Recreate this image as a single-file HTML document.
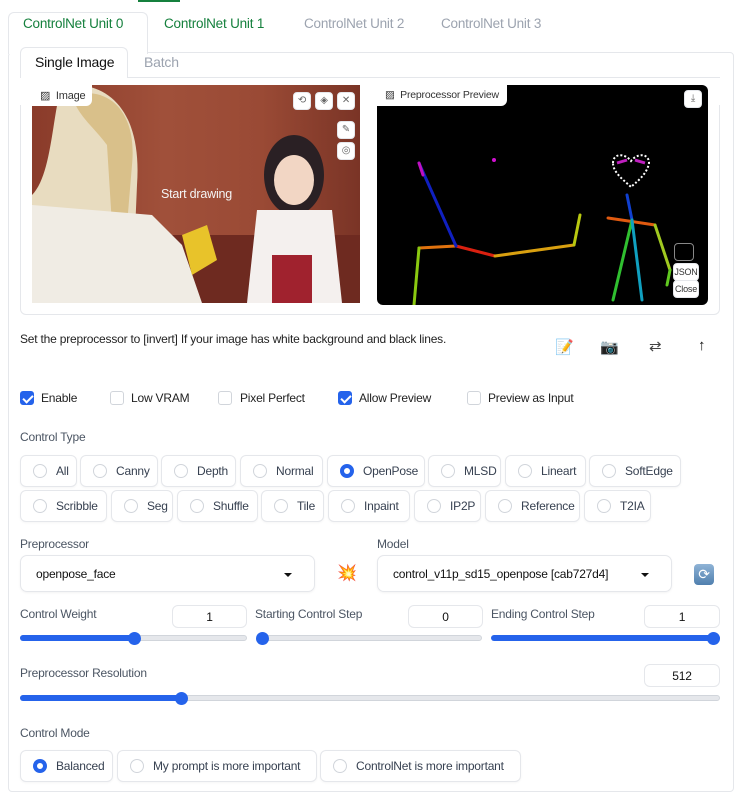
<!DOCTYPE html>
<html><head><meta charset="utf-8"><style>
*{box-sizing:border-box;margin:0;padding:0}
body{width:740px;height:786px;background:#fff;font-family:"Liberation Sans",sans-serif;color:#374151;position:relative;overflow:hidden;font-size:12px;letter-spacing:-0.2px}
.a{position:absolute}
.lbl{position:absolute;font-size:12px;color:#4b5563}
.btn{position:absolute;border:1px solid #e5e7eb;border-radius:6px;background:#fff;height:32px;display:flex;align-items:center;padding-left:12px;font-size:12px;color:#374151;box-shadow:0 1px 2px rgba(0,0,0,.04)}
.rad{width:14px;height:14px;border-radius:50%;border:1px solid #d1d5db;margin-right:9px;flex:none;background:#fff}
.rad.on{border:4px solid #2563eb}
.cb{position:absolute;width:14px;height:14px;border:1px solid #d1d5db;border-radius:3px;background:#fff}
.cb.on{background:#2563eb;border-color:#2563eb}
.cb.on:after{content:"";position:absolute;left:4px;top:1px;width:4px;height:8px;border:solid #fff;border-width:0 2px 2px 0;transform:rotate(45deg)}
.num{position:absolute;border:1px solid #e5e7eb;border-radius:6px;height:23px;text-align:center;line-height:22px;font-size:12px;color:#111}
.track{position:absolute;height:6px;border-radius:3px;background:#e5e7eb;border:1px solid #d1d5db}
.fill{position:absolute;height:6px;border-radius:3px;background:#2563eb}
.thumb{position:absolute;width:13px;height:13px;border-radius:50%;background:#2563eb}
.sel{position:absolute;border:1px solid #e5e7eb;border-radius:7px;height:37px;display:flex;align-items:center;padding-left:15px;font-size:12px;color:#111;box-shadow:0 1px 2px rgba(0,0,0,.05)}
.sel:after{content:"";position:absolute;right:22px;top:17px;border:4px solid transparent;border-top:4px solid #111}
.ib{position:absolute;width:18px;height:18px;background:#fff;border-radius:4px;border:1px solid #e5e7eb;font-size:10px;color:#666;text-align:center;line-height:16px}
</style></head><body>
<div class="a" style="left:138px;top:0;width:42px;height:2px;background:#15803d"></div>
<div class="a" style="left:8px;top:52px;width:726px;height:740px;border:1px solid #e5e7eb;border-radius:4px"></div>
<div class="a" style="left:8px;top:12px;width:140px;height:42px;border:1px solid #e5e7eb;border-bottom:none;border-radius:6px 6px 0 0;background:#fff"></div>
<div class="a" style="left:23px;top:16px;font-size:13.5px;color:#15803d">ControlNet Unit 0</div>
<div class="a" style="left:164px;top:16px;font-size:13.5px;color:#15803d">ControlNet Unit 1</div>
<div class="a" style="left:304px;top:16px;font-size:13.5px;color:#9ca3af">ControlNet Unit 2</div>
<div class="a" style="left:441px;top:16px;font-size:13.5px;color:#9ca3af">ControlNet Unit 3</div>
<div class="a" style="left:20px;top:105px;width:700px;height:210px;border:1px solid #e5e7eb;border-top:none;border-radius:0 0 6px 6px"></div>
<div class="a" style="left:20px;top:77px;width:700px;height:1px;background:#e5e7eb"></div>
<div class="a" style="left:20px;top:47px;width:108px;height:31px;border:1px solid #e5e7eb;border-bottom:none;border-radius:6px 6px 0 0;background:#fff"></div>
<div class="a" style="left:35px;top:54px;font-size:14px;color:#111">Single Image</div>
<div class="a" style="left:144px;top:54px;font-size:14px;color:#9ca3af">Batch</div>
<div class="a" style="left:32px;top:85px;width:328px;height:218px;overflow:hidden;background:linear-gradient(90deg,#8a3b2a 0%,#a0503a 40%,#9a4a35 70%,#7a3426 100%)">
<svg width="328" height="218">
<rect x="0" y="150" width="328" height="68" fill="#6e2a20"/>
<path d="M30 0 C80 -5 110 30 105 100 L100 218 L0 218 L0 110 C20 90 20 30 30 0Z" fill="#e8dcc0"/>
<path d="M40 10 C80 0 105 30 100 80 L95 140 L80 140 L75 60 C60 40 45 30 40 10Z" fill="#d9c08a"/>
<rect x="85" y="150" width="25" height="30" fill="#e9e5da"/>
<path d="M0 120 L120 130 L150 160 L170 218 L0 218Z" fill="#f0ece4"/>
<path d="M150 150 L175 140 L185 175 L160 190Z" fill="#e8c32a"/>
<ellipse cx="262" cy="90" rx="30" ry="40" fill="#2a2024"/>
<ellipse cx="262" cy="95" rx="20" ry="25" fill="#f2d6c4"/>
<path d="M225 125 L300 125 L310 218 L215 218Z" fill="#f4f0ee"/>
<rect x="240" y="170" width="40" height="48" fill="#a0222e"/>
</svg>
<div class="a" style="left:129px;top:102px;color:#f5f5f5;font-size:12.5px">Start drawing</div>
</div>
<div class="a" style="left:32px;top:85px;width:60px;height:21px;background:#fff;border-radius:0 0 6px 0;font-size:11px;padding:4px 0 0 8px;color:#333;white-space:nowrap">▨ &nbsp;Image</div>
<div class="ib" style="left:293px;top:92px">⟲</div><div class="ib" style="left:315px;top:92px">◈</div><div class="ib" style="left:337px;top:92px">✕</div>
<div class="ib" style="left:337px;top:121px">✎</div><div class="ib" style="left:337px;top:142px">◎</div>
<div class="a" style="left:377px;top:85px;width:331px;height:220px;background:#000;border-radius:6px;overflow:hidden">
<svg width="331" height="220" style="position:absolute;left:0;top:0">
<g stroke-width="3" stroke-linecap="round">
<line x1="42" y1="163" x2="79" y2="161" stroke="#e0720e"/>
<line x1="79" y1="161" x2="118" y2="171" stroke="#d92010"/>
<line x1="118" y1="171" x2="197" y2="160" stroke="#d9a010"/>
<line x1="197" y1="160" x2="203" y2="130" stroke="#b8c810"/>
<line x1="42" y1="163" x2="37" y2="220" stroke="#8ac810"/>
<line x1="79" y1="161" x2="42" y2="78" stroke="#1020c0"/>
<line x1="42" y1="78" x2="46" y2="90" stroke="#c010c0"/>
<line x1="231" y1="133" x2="278" y2="140" stroke="#e05a10"/>
<line x1="255" y1="135" x2="250" y2="110" stroke="#1040d0"/>
<line x1="255" y1="135" x2="236" y2="215" stroke="#30c030"/>
<line x1="255" y1="135" x2="265" y2="215" stroke="#10a0c0"/>
<line x1="278" y1="140" x2="293" y2="185" stroke="#a0c820"/>
<line x1="293" y1="185" x2="290" y2="200" stroke="#60c820"/>
</g>
<circle cx="117" cy="75" r="2" fill="#d010d0"/>
<path d="M236 78 C236 68 248 68 254 76 C260 68 272 68 272 78 C270 90 258 98 254 102 C248 96 236 88 236 78Z" fill="none" stroke="#fff" stroke-width="2" stroke-dasharray="2 2"/>
<path d="M240 78 L250 75 M258 75 L268 78" stroke="#c020c0" stroke-width="3"/>
</svg>
</div>
<div class="a" style="left:377px;top:85px;width:130px;height:21px;background:#fff;border-radius:0 0 6px 0;font-size:10.5px;padding:4px 0 0 8px;color:#333;white-space:nowrap">▨ &nbsp;Preprocessor Preview</div>
<div class="ib" style="left:684px;top:90px">⤓</div>
<div class="ib" style="left:674px;top:243px;width:20px;background:#000;border-color:#888"></div>
<div class="ib" style="left:673px;top:263px;width:26px;font-size:9px;color:#333">JSON</div>
<div class="ib" style="left:673px;top:280px;width:26px;font-size:9px;color:#333">Close</div>
<div class="a" style="left:20px;top:332px;font-size:12px;color:#222;white-space:nowrap">Set the preprocessor to [invert] If your image has white background and black lines.</div>
<div class="a" style="left:555px;top:338px;font-size:15px">📝</div>
<div class="a" style="left:600px;top:338px;font-size:15px">📷</div>
<div class="a" style="left:649px;top:337px;font-size:15px;color:#444">⇄</div>
<div class="a" style="left:698px;top:337px;font-size:15px;color:#111">↑</div>
<div class="cb on" style="left:20px;top:391px"></div><div class="lbl" style="left:41px;top:391px;color:#222">Enable</div>
<div class="cb" style="left:110px;top:391px"></div><div class="lbl" style="left:131px;top:391px;color:#222">Low VRAM</div>
<div class="cb" style="left:218px;top:391px"></div><div class="lbl" style="left:240px;top:391px;color:#222">Pixel Perfect</div>
<div class="cb on" style="left:338px;top:391px"></div><div class="lbl" style="left:359px;top:391px;color:#222">Allow Preview</div>
<div class="cb" style="left:467px;top:391px"></div><div class="lbl" style="left:488px;top:391px;color:#222">Preview as Input</div>
<div class="lbl" style="left:20px;top:430px">Control Type</div>
<div class="btn" style="left:20px;top:455px;width:57px"><span class="rad"></span>All</div>
<div class="btn" style="left:80px;top:455px;width:78px"><span class="rad"></span>Canny</div>
<div class="btn" style="left:161px;top:455px;width:75px"><span class="rad"></span>Depth</div>
<div class="btn" style="left:240px;top:455px;width:83px"><span class="rad"></span>Normal</div>
<div class="btn" style="left:327px;top:455px;width:98px"><span class="rad on"></span>OpenPose</div>
<div class="btn" style="left:428px;top:455px;width:73px"><span class="rad"></span>MLSD</div>
<div class="btn" style="left:505px;top:455px;width:81px"><span class="rad"></span>Lineart</div>
<div class="btn" style="left:589px;top:455px;width:92px"><span class="rad"></span>SoftEdge</div>
<div class="btn" style="left:20px;top:490px;width:87px"><span class="rad"></span>Scribble</div>
<div class="btn" style="left:111px;top:490px;width:62px"><span class="rad"></span>Seg</div>
<div class="btn" style="left:177px;top:490px;width:81px"><span class="rad"></span>Shuffle</div>
<div class="btn" style="left:261px;top:490px;width:63px"><span class="rad"></span>Tile</div>
<div class="btn" style="left:328px;top:490px;width:82px"><span class="rad"></span>Inpaint</div>
<div class="btn" style="left:414px;top:490px;width:67px"><span class="rad"></span>IP2P</div>
<div class="btn" style="left:485px;top:490px;width:95px"><span class="rad"></span>Reference</div>
<div class="btn" style="left:584px;top:490px;width:67px"><span class="rad"></span>T2IA</div>
<div class="lbl" style="left:20px;top:537px">Preprocessor</div>
<div class="lbl" style="left:377px;top:537px">Model</div>
<div class="sel" style="left:20px;top:555px;width:295px">openpose_face</div>
<div class="a" style="left:337px;top:563px;font-size:16px">💥</div>
<div class="sel" style="left:377px;top:555px;width:295px">control_v11p_sd15_openpose [cab727d4]</div>
<div class="a" style="left:694px;top:564px;width:20px;height:21px;border-radius:4px;background:linear-gradient(#8fb3d6,#4f7fae);color:#fff;text-align:center;line-height:20px;font-size:14px">⟳</div>
<div class="lbl" style="left:20px;top:607px">Control Weight</div>
<div class="num" style="left:172px;top:605px;width:75px">1</div>
<div class="lbl" style="left:255px;top:607px">Starting Control Step</div>
<div class="num" style="left:408px;top:605px;width:75px">0</div>
<div class="lbl" style="left:491px;top:607px">Ending Control Step</div>
<div class="num" style="left:644px;top:605px;width:76px">1</div>
<div class="track" style="left:20px;top:635px;width:227px"></div><div class="fill" style="left:20px;top:635px;width:114px"></div><div class="thumb" style="left:128px;top:632px"></div>
<div class="track" style="left:256px;top:635px;width:226px"></div><div class="thumb" style="left:256px;top:632px"></div>
<div class="fill" style="left:491px;top:635px;width:229px"></div><div class="thumb" style="left:707px;top:632px"></div>
<div class="lbl" style="left:20px;top:666px">Preprocessor Resolution</div>
<div class="num" style="left:644px;top:664px;width:76px">512</div>
<div class="track" style="left:20px;top:695px;width:700px"></div><div class="fill" style="left:20px;top:695px;width:162px"></div><div class="thumb" style="left:175px;top:692px"></div>
<div class="lbl" style="left:20px;top:726px">Control Mode</div>
<div class="btn" style="left:20px;top:750px;width:93px"><span class="rad on"></span>Balanced</div>
<div class="btn" style="left:117px;top:750px;width:200px"><span class="rad"></span>My prompt is more important</div>
<div class="btn" style="left:320px;top:750px;width:201px"><span class="rad"></span>ControlNet is more important</div>
</body></html>
